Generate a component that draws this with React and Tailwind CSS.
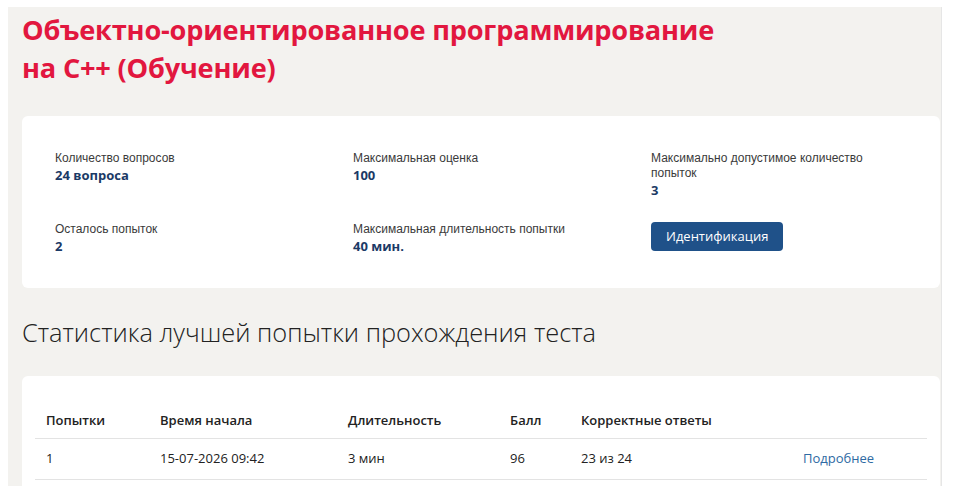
const info = [
  { label: 'Количество вопросов', value: '24 вопроса' },
  { label: 'Максимальная оценка', value: '100' },
  { label: 'Максимально допустимое количество попыток', value: '3' },
  { label: 'Осталось попыток', value: '2' },
  { label: 'Максимальная длительность попытки', value: '40 мин.' },
]

const attempts = [
  { n: 1, start: '15-07-2026 09:42', duration: '3 мин', score: 96, correct: '23 из 24' },
]

const InfoItem = ({ label, value }) => (
  <div className="max-w-[240px]">
    <div className="font-['Liberation_Sans',Arial,sans-serif] text-[12px] leading-[15px] text-[#3a3a3a]">{label}</div>
    <div className="text-[13px] leading-[17px] font-bold text-[#1b3a66] mt-[1px]">{value}</div>
  </div>
)

const App = () => {
  return (
    <div className="min-h-[486px] bg-white font-['Open_Sans','Noto_Sans',sans-serif] pt-[7px] pl-[8px]">
      <div className="w-[934px] bg-[#f3f2ef] border-r border-[#e6e6e6] pl-[14px] pr-[1px] pb-[20px]">
        <h1 className="pt-[4px] text-[27.2px] leading-[38px] font-bold text-[#e2173f] tracking-[-0.2px]">
          Объектно-ориентированное программирование
          <br />
          на C++ (Обучение)
        </h1>

        <div className="mt-[29px] bg-white rounded-md px-[33px] pt-[35px] pb-[33px]">
          <div className="grid grid-cols-[298px_298px_1fr] gap-y-[23px] items-start">
            <InfoItem {...info[0]} />
            <InfoItem {...info[1]} />
            <InfoItem {...info[2]} />
            <InfoItem {...info[3]} />
            <InfoItem {...info[4]} />
            <div>
              <button className="h-[29px] px-[15px] rounded bg-[#1f5189] text-white text-[13px] leading-[29px]">
                Идентификация
              </button>
            </div>
          </div>
        </div>

        <h2 className="mt-[26px] text-[25.4px] leading-[36px] font-light text-[#222]">
          Статистика лучшей попытки прохождения теста
        </h2>

        <div className="mt-[26px] bg-white rounded-md px-[13px] pt-[28px] pb-[24px]">
          <table className="w-full text-[13px] text-[#222] border-collapse">
            <thead>
              <tr className="border-b border-[#e3e3e3]">
                <th className="w-[114px] text-left font-semibold pl-[11px] h-[34px]">Попытки</th>
                <th className="w-[188px] text-left font-semibold pl-[11px]">Время начала</th>
                <th className="w-[162px] text-left font-semibold pl-[11px]">Длительность</th>
                <th className="w-[71px] text-left font-semibold pl-[11px]">Балл</th>
                <th className="w-[222px] text-left font-semibold pl-[11px]">Корректные ответы</th>
                <th className="text-left font-semibold pl-[11px]"></th>
              </tr>
            </thead>
            <tbody>
              {attempts.map((a) => (
                <tr key={a.n} className="border-b border-[#e3e3e3]">
                  <td className="pl-[11px] h-[41px]">{a.n}</td>
                  <td className="pl-[11px]">{a.start}</td>
                  <td className="pl-[11px]">{a.duration}</td>
                  <td className="pl-[11px]">{a.score}</td>
                  <td className="pl-[11px]">{a.correct}</td>
                  <td className="pl-[11px]">
                    <a href="#" className="text-[#2e6aa3]">Подробнее</a>
                  </td>
                </tr>
              ))}
            </tbody>
          </table>
        </div>
      </div>
    </div>
  )
}

export default App
